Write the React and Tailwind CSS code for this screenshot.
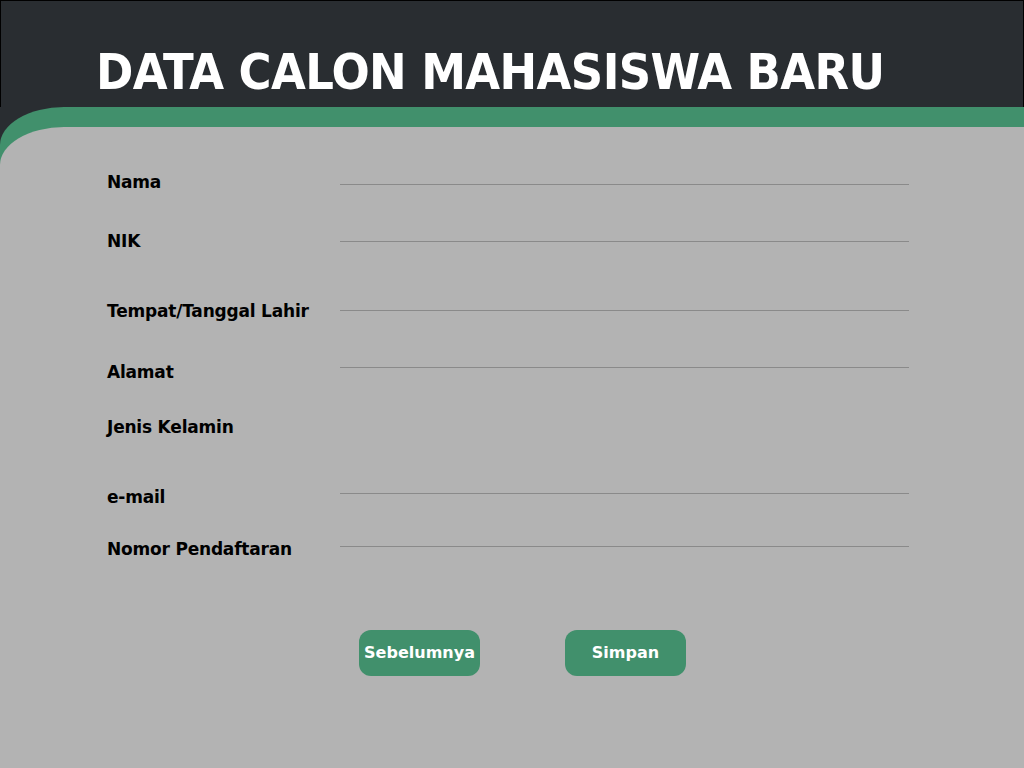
import React from "react";

const rows = [
  { label: "Nama", mt: "mt-[45px]", lineMt: "mt-[12px]", line: true },
  { label: "NIK", mt: "mt-[39px]", lineMt: "mt-[10px]", line: true },
  { label: "Tempat/Tanggal Lahir", mt: "mt-[50px]", lineMt: "mt-[9px]", line: true },
  { label: "Alamat", mt: "mt-[41px]", lineMt: "mt-[5px]", line: true },
  { label: "Jenis Kelamin", mt: "mt-[35px]", lineMt: "", line: false },
  { label: "e-mail", mt: "mt-[50px]", lineMt: "mt-[6px]", line: true },
  { label: "Nomor Pendaftaran", mt: "mt-[32px]", lineMt: "mt-[7px]", line: true },
];

const sans = { fontFamily: "'DejaVu Sans', 'Liberation Sans', sans-serif" };
const condensed = { fontFamily: "'DejaVu Sans Condensed', 'DejaVu Sans', sans-serif" };

export default function App() {
  return (
    <div className="w-[1024px] h-[768px] overflow-hidden bg-[#292d31] flex flex-col" style={sans}>
      <div className="h-[107px] shrink-0 pt-[46px] pl-[95px] border-t border-l border-r border-black">
        <h1
          className="text-[50px] leading-none font-bold text-white tracking-[-0.6px] whitespace-nowrap font-stretch-condensed"
          style={condensed}
        >
          DATA CALON MAHASISWA BARU
        </h1>
      </div>
      <div className="flex-1 bg-[#41906c] rounded-tl-[64px_38px] flex flex-col">
        <div className="flex-1 mt-[20px] bg-[#b3b3b3] rounded-tl-[64px_38px] flex flex-col">
          <div className="pl-[107px] flex flex-col">
            {rows.map((r) => (
              <div key={r.label} className={`${r.mt} flex items-start h-[20px]`}>
                <div className="w-[233px] shrink-0 text-[17px] leading-[20px] font-bold text-black whitespace-nowrap tracking-[-0.2px]">
                  {r.label}
                </div>
                {r.line && (
                  <div className={`${r.lineMt} w-[569px] h-px bg-[#8a8a8a]`} />
                )}
              </div>
            ))}
          </div>
          <div className="mt-[71px] pl-[359px] flex gap-[85px]">
            <button className="w-[121px] h-[46px] rounded-[12px] bg-[#41906c] text-white text-[16px] leading-none font-bold flex items-center justify-center">
              Sebelumnya
            </button>
            <button className="w-[121px] h-[46px] rounded-[12px] bg-[#41906c] text-white text-[16px] leading-none font-bold flex items-center justify-center">
              Simpan
            </button>
          </div>
        </div>
      </div>
    </div>
  );
}
